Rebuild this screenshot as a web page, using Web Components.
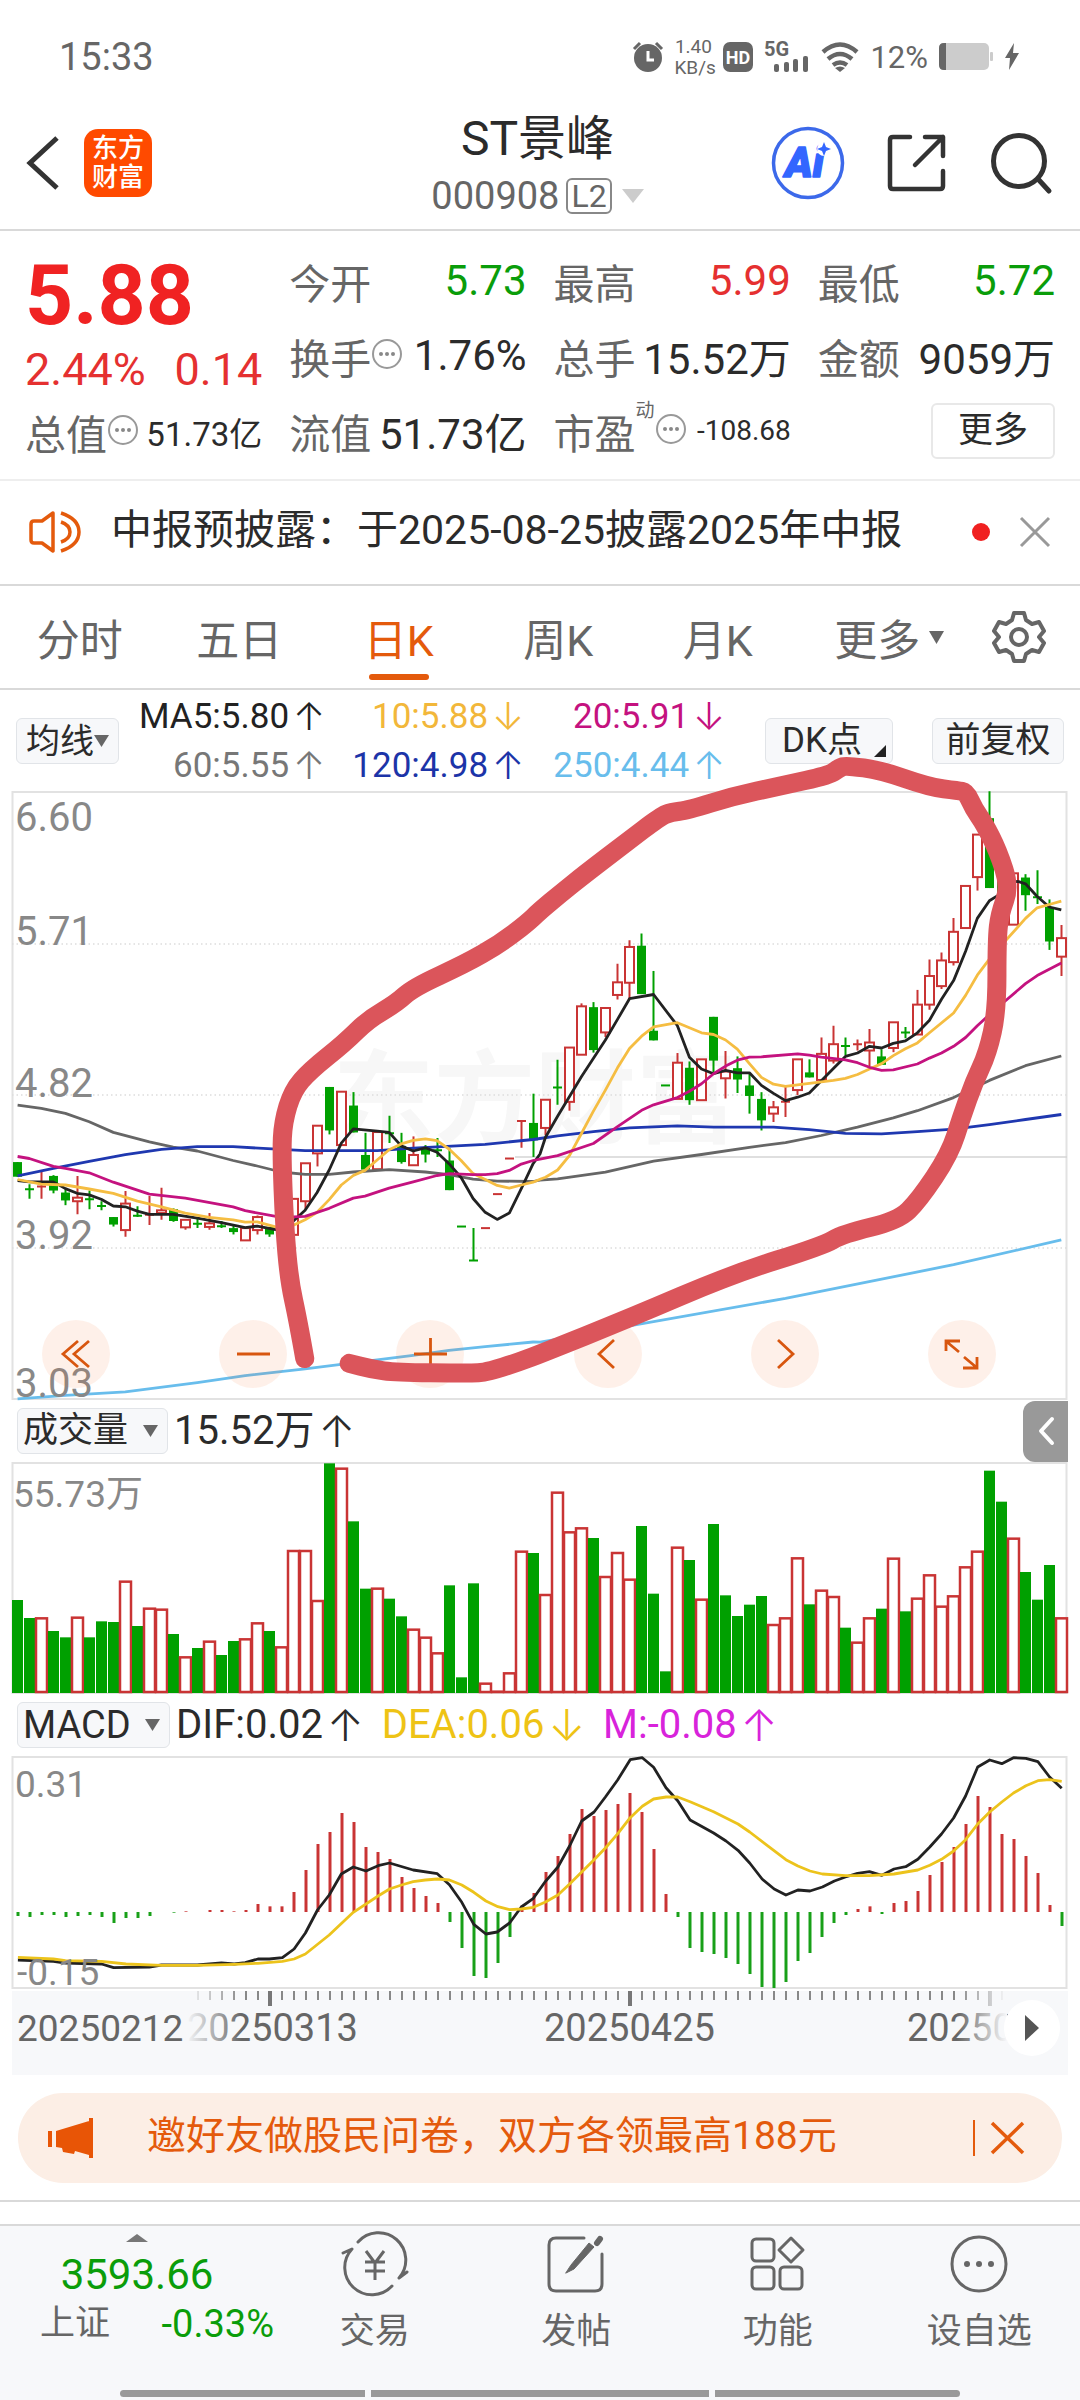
<!DOCTYPE html>
<html lang="zh-CN">
<head>
<meta charset="utf-8">
<meta name="viewport" content="width=device-width, initial-scale=1">
<title>ST景峰 000908</title>
<style>
  :root { --ink:#2b2b2b; --sub:#666; --red:#f02222; --green:#0a9d0a; --brand:#e45a0c; --line:#d9d9d9; --panel:#f7f8fa; }
  body { margin:0; background:#fff; color:var(--ink); font-family:Roboto,"Noto Sans CJK SC",sans-serif; }
</style>
</head>
<body>
<stock-page></stock-page>
<script>
const BASE = `<style>
  *{box-sizing:border-box}
  :host{display:block}
  button,select{font:inherit;color:inherit;background:none;border:0;padding:0;margin:0;appearance:none;cursor:pointer}
  svg{display:block;flex:none;overflow:visible}
</style>`;
const define = (name, html, setup) => customElements.define(name, class extends HTMLElement {
  connectedCallback() {
    if (this.shadowRoot) return;
    const t = document.createElement('template');
    t.innerHTML = BASE + html;
    this.attachShadow({ mode: 'open' }).append(t.content.cloneNode(true));
    if (setup) setup(this, this.shadowRoot);
  }
});

/* ---------- small parts ---------- */
define('drop-select', `<style>
  :host{display:inline-block}
  .w{display:grid;align-items:center;height:46px;border:1px solid #e1e4e8;border-radius:6px;background:var(--panel);font-size:35px;color:var(--ink)}
  select,svg{grid-area:1/1}
  select{height:44px;line-height:44px;padding:0 38px 0 5px}
  :host([latin]) select{font-size:38px}
  :host([tight]) select{padding-right:24px;padding-left:9px;font-size:34px}
  svg{justify-self:end;margin-right:9px;pointer-events:none}
</style>
<label class="w"><select></select><svg width="15" height="12"><path d="M0 0h15l-7.500 12z" fill="#666"/></svg></label>`, (el, r) => {
  const s = r.querySelector('select');
  s.setAttribute('aria-label', el.getAttribute('label'));
  s.append(new Option(el.getAttribute('value')));
});

define('value-tag', `<style>
  :host{display:inline-flex;align-items:center;justify-content:flex-end;white-space:nowrap}
  i{font:normal 300 1.1em/1 Inter,sans-serif;margin-left:4px}
</style><span><slot></slot></span><i></i>`, (el, r) => {
  r.querySelector('i').textContent = el.hasAttribute('up') ? '↑' : '↓';
});

define('quote-item', `<style>
  :host{display:flex;align-items:center;height:75px;font-size:42px;white-space:nowrap;color:var(--ink)}
  .l{font-size:41px;color:var(--sub)}
  .v{margin-left:auto}
  :host([tone=red]) .v{color:#e53030}
  :host([tone=green]) .v{color:var(--green)}
  :host([size=m]) .v{font-size:33px}
  :host([size=s]) .v{font-size:28px}
  :host([size=m]){height:60px}
  sup{font-size:19px;color:var(--sub);align-self:flex-start;line-height:20px;margin-top:8px}
  svg{display:none}
  :host([info]) svg{display:block}
</style><span class="l"><slot name="label"></slot></span><sup hidden></sup>
<svg width="32" height="32" viewBox="0 0 32 32" fill="none" stroke="#999" stroke-width="2"><circle cx="16" cy="14" r="14"/><g fill="#888" stroke="none"><circle cx="10" cy="14" r="2"/><circle cx="16" cy="14" r="2"/><circle cx="22" cy="14" r="2"/></g></svg>
<span class="v"><slot></slot></span>`, (el, r) => {
  if (el.hasAttribute('sup')) { const s = r.querySelector('sup'); s.hidden = false; s.textContent = el.getAttribute('sup'); }
});

/* ---------- bars ---------- */
define('status-bar', `<style>
  :host{display:flex;align-items:center;height:96px;padding:18px 60px 0 59px;color:#666;font-size:38px}
  .r{margin-left:auto;display:flex;align-items:center;gap:11px}
  .k{font-size:19px;line-height:21px;text-align:center;width:38px}
  .p{font-size:31px}
</style><span>15:33</span>
<div class="r">
  <svg width="30" height="30" viewBox="0 0 30 30"><circle cx="15" cy="16" r="14" fill="#666"/><path d="M1 7 7 1M29 7 23 1" stroke="#666" stroke-width="3"/><path d="M15 9v9h6" fill="none" stroke="#fff" stroke-width="3"/></svg>
  <div class="k">1.40<br>KB/s</div>
  <svg width="30" height="30" viewBox="0 0 30 30"><rect width="30" height="30" rx="7" fill="#666"/><text x="15" y="22" font-size="18" font-weight="700" fill="#fff" text-anchor="middle">HD</text></svg>
  <svg width="46" height="32" viewBox="0 0 46 32" fill="#666"><text x="0" y="15" font-size="20" font-weight="700">5G</text><rect x="10" y="23" width="5" height="8" rx="2"/><rect x="20" y="21" width="5" height="10" rx="2"/><rect x="29" y="18" width="5" height="13" rx="2"/><rect x="39" y="15" width="5" height="16" rx="2"/></svg>
  <svg width="38" height="30" viewBox="0 0 38 30" fill="none" stroke="#666" stroke-width="4.500"><path d="M2 10q17-15 34 0M7 17q12-10 24 0M12 23q7-5 14 0"/><path d="m14 26 5 4 5-4q-5-3-10 0z" fill="#666" stroke="none"/></svg>
  <span class="p">12%</span>
  <svg width="54" height="28" viewBox="0 0 54 28"><rect x="0" y="0" width="50" height="27" rx="5" fill="#ccc"/><path d="M7 0H5Q0 0 0 5v17q0 5 5 5h2z" fill="#666"/><rect x="51" y="9" width="3" height="9" rx="1" fill="#ccc"/></svg>
  <svg width="16" height="28" viewBox="0 0 16 28"><path d="M10 0 1 15h5L5 27 15 10H9z" fill="#666"/></svg>
</div>`);

define('stock-header', `<style>
  :host{display:grid;grid-template-columns:1fr auto 1fr;align-items:center;height:135px;padding:0 29px 0 24px;border-bottom:2px solid var(--line)}
  .a,.c{display:flex;align-items:center}
  .a{gap:22px}
  .c{justify-content:flex-end;gap:42px}
  .logo{width:68px;height:68px;border-radius:14px;background:#ff4a00;color:#fff;font-weight:500;font-size:26px;line-height:29px;display:flex;flex-direction:column;align-items:center;justify-content:center}
  h1{margin:0;font-size:48px;line-height:66px;font-weight:400;text-align:center}
  .s{display:flex;align-items:center;justify-content:center;font-size:38px;line-height:48px;color:var(--sub);gap:7px}
  .l2{border:2px solid #888;border-radius:6px;font-size:32px;line-height:32px;padding:0 3px}
  .s svg{margin-left:3px}
</style>
<div class="a"><button aria-label="返回"><svg width="38" height="56" viewBox="0 0 38 56"><path d="M33 3 6 28l27 25" fill="none" stroke="#333" stroke-width="5"/></svg></button>
<div class="logo"><span>东方</span><span>财富</span></div></div>
<div><h1>ST景峰</h1><div class="s"><span>000908</span><span class="l2">L2</span><svg width="22" height="14"><path d="M0 0h22L11 14z" fill="#ccc"/></svg></div></div>
<div class="c">
 <button aria-label="AI 助手"><svg width="74" height="74" viewBox="0 0 74 74"><circle cx="37" cy="37" r="34.500" fill="none" stroke="#3c69ea" stroke-width="3.500"/><text x="14" y="51" font-size="42" font-weight="900" font-style="italic" fill="#3366ff" stroke="#3366ff" stroke-width="1.500" stroke-linejoin="round">Ai</text><circle cx="53" cy="23" r="7" fill="#fff"/><path d="m53 16 2 5 5 2-5 2-2 5-2-5-5-2 5-2z" fill="#3366ff"/></svg></button>
 <button aria-label="分享"><svg width="60" height="60" viewBox="0 0 60 60" fill="none" stroke="#333" stroke-width="4.500" stroke-linecap="round" stroke-linejoin="round"><path d="M23 4H6q-3 0-3 3v46q0 3 3 3h47q3 0 3-3V38M38 4h18v19M56 4 28 32"/></svg></button>
 <button aria-label="搜索"><svg width="62" height="60" viewBox="0 0 62 60" fill="none" stroke="#333" stroke-width="5" stroke-linecap="round"><circle cx="30" cy="28" r="25.500"/><path d="m49 46 11 12"/></svg></button>
</div>`);

define('quote-panel', `<style>
  :host{display:grid;grid-template-columns:repeat(4,1fr);column-gap:27px;padding:12px 25px 11px;border-bottom:2px solid #eee}
  .p{padding-top:11px}
  .big{font-size:84px;line-height:84px;font-weight:700;color:var(--red)}
  .chg{display:flex;justify-content:space-between;font-size:45px;line-height:64px;color:#e53030}
  .m{height:75px;display:flex;align-items:center;justify-content:flex-end}
  .m button{width:124px;height:56px;border:2px solid #e8e8e8;border-radius:6px;font-size:35px;line-height:50px;color:var(--ink)}
</style>
<div class="p"><div class="big">5.88</div><div class="chg"><span>2.44%</span><span>0.14</span></div><quote-item size="m" info><span slot="label">总值</span>51.73亿</quote-item></div>
<div><quote-item tone="green"><span slot="label">今开</span>5.73</quote-item><quote-item info><span slot="label">换手</span>1.76%</quote-item><quote-item><span slot="label">流值</span>51.73亿</quote-item></div>
<div><quote-item tone="red"><span slot="label">最高</span>5.99</quote-item><quote-item><span slot="label">总手</span>15.52万</quote-item><quote-item size="s" info sup="动"><span slot="label">市盈</span>-108.68</quote-item></div>
<div><quote-item tone="green"><span slot="label">最低</span>5.72</quote-item><quote-item><span slot="label">金额</span>9059万</quote-item><div class="m"><button>更多</button></div></div>`);

define('notice-bar', `<style>
  :host{display:flex;align-items:center;height:105px;padding:0 30px 2px 28px;border-bottom:2px solid var(--line);font-size:41px;line-height:60px;white-space:nowrap}
  span{margin-left:29px;padding-bottom:3px}
  b{margin-left:auto;width:18px;height:18px;border-radius:50%;background:#f02020;margin-right:30px}
</style>
<svg width="54" height="44" viewBox="0 0 54 44" fill="none" stroke="#e45a0c" stroke-width="3.500" stroke-linejoin="round"><path d="M25 3 14 11H6q-3 0-3 3v16q0 3 3 3h8l11 8zM33 3q18 6 18 19T33 41M33 12q9 3 9 10t-9 10"/></svg>
<span>中报预披露：于2025-08-25披露2025年中报</span><b></b>
<button aria-label="关闭"><svg width="30" height="30" viewBox="0 0 30 30" stroke="#999" stroke-width="3"><path d="m1 1 28 28M29 1 1 29"/></svg></button>`);

define('period-tabs', `<style>
  :host{display:flex;align-items:center;height:104px;border-bottom:2px solid var(--line);font-size:43px;color:var(--sub)}
  button{flex:1;height:100%;display:flex;align-items:center;justify-content:center;position:relative}
  .on{color:var(--brand)}
  .on::after{content:"";position:absolute;left:50%;bottom:8px;width:60px;height:6px;margin-left:-30px;border-radius:3px;background:var(--brand)}
  .more svg{margin:0 -24px 0 9px}
  .gear{flex:0 0 123px}
</style>
<button>分时</button><button>五日</button><button class="on">日K</button><button>周K</button><button>月K</button>
<button class="more">更多<svg width="15" height="13"><path d="M0 0h15l-7.500 13z" fill="#666"/></svg></button>
<button class="gear" aria-label="设置"><svg width="54" height="54" viewBox="0 0 54 54" fill="none" stroke="#666" stroke-width="4" stroke-linejoin="round"><path d="M22 3h10l2 7 6 4 7-2 5 9-5 6 5 6-5 9-7-2-6 4-2 7H22l-2-7-6-4-7 2-5-9 5-6-5-6 5-9 7 2 6-4z"/><circle cx="27" cy="27" r="8"/></svg></button>`);

define('ma-legend', `<style>
  :host{display:flex;align-items:center;height:101px;padding:0 16px;font-size:35px}
  .g{display:grid;grid-template-columns:auto 199px 201px;line-height:49px;margin-left:20px}
  .g>*{justify-self:end}
  .b{height:46px;border:1px solid #e1e4e8;border-radius:6px;background:var(--panel);font-size:35px;line-height:42px;position:relative;white-space:nowrap}
  .dk{width:128px;margin-left:auto;padding-right:14px}
  .dk svg{position:absolute;right:6px;bottom:6px}
  .fq{width:132px;margin-left:39px}
</style>
<drop-select tight label="指标" value="均线"></drop-select>
<div class="g">
<value-tag up style="color:#222">MA5:5.80</value-tag><value-tag style="color:#f2b73a">10:5.88</value-tag><value-tag style="color:#c4127f">20:5.91</value-tag>
<value-tag up style="color:#777">60:5.55</value-tag><value-tag up style="color:#1c34a8">120:4.98</value-tag><value-tag up style="color:#68bdec">250:4.44</value-tag>
</div>
<button class="b dk">DK点<svg width="12" height="12"><path d="M12 0v12H0z" fill="#222"/></svg></button><button class="b fq">前复权</button>`);

/* ---------- chart data ---------- */
const RED = '#c93434', GREEN = '#00a000';
const X = i => 5.5 + 12 * i;
/* Plot points are stored on two half-width grids; L and R turn them into chart units. */
const L = (sy, oy) => ([x, y]) => [x / 2.904 - 12, y / sy + oy];
const R = (sy, oy) => ([x, y]) => [x / 2.904 + 528, y / sy + oy];
const pairs = s => s.trim().split(' ').map(p => p.split(',').map(Number));
const pts = (l, r, fl, fr) => [...pairs(l).map(fl), ...pairs(r).map(fr)].map(p => p.map(n => n.toFixed(1)).join(',')).join(' ');

const KL = L(2.529, -1), KR = R(2.376, -41);
/* colour, high, body top, body bottom, low */
const candlesL = `g941,941,978,978 g997,1010,1010,1034 r966,1003,1003,1034 g974,976,1013,1020 g1010,1018,1038,1050 r976,1031,1040,1073 g1013,1035,1035,1060 g1040,1052,1052,1063 g1080,1080,1099,1104 r1014,1046,1113,1130 g1053,1077,1077,1080 r1027,1074,1074,1100 r1006,1063,1070,1087 g1058,1060,1090,1092 r1087,1087,1106,1112 g1085,1097,1097,1108 r1070,1096,1105,1112 g1090,1103,1103,1108 g1100,1108,1118,1124 r1108,1108,1139,1139 r1076,1080,1113,1124 g1105,1105,1124,1130 r1080,1080,1125,1125 r1034,1034,1125,1125 r944,944,1040,1060 r849,849,919,952 g751,751,861,871 r763,763,898,898 g764,798,866,866 g867,923,960,960 r865,865,959,959 g824,868,868,893 g867,900,941,945 r876,923,949,949 g898,908,922,942 g880,911,911,928 g905,937,1012,1012 g1104,1104,1104,1104 g1108,1190,1190,1190 r1108,1108,1108,1108 r1022,1022,1022,1022 r932,932,932,932 r837,837,837,905 g768,842,886,928`.split(' ');
const candlesR = `r831,831,898,915 g736,802,802,843 r707,707,836,857 r602,609,724,724 g599,611,713,719 r613,613,671,682 r508,552,582,593 r452,468,553,592 g436,465,580,580 g525,667,690,690 g797,797,797,797 r720,743,829,829 g740,755,832,843 r735,735,832,832 g634,634,738,768 r715,764,780,828 g728,756,783,815 g768,797,822,864 g813,829,880,904 r834,849,864,884 r800,836,836,872 r735,735,808,820 g735,766,778,778 r683,722,784,784 r655,699,738,745 g683,703,703,725 r688,699,699,714 r663,695,714,752 g711,728,748,748 r647,647,708,718 g658,671,671,685 r570,605,676,676 r498,537,605,617 r481,500,561,568 r399,432,504,512 r323,323,423,423 r201,201,302,334 g98,162,328,328 g240,240,340,340 r293,293,415,415 g295,303,345,382 g286,350,350,366 g355,373,455,475 r416,447,491,537`.split(' ');
const ma = [
 ['#68bdec', '51,1540 190,1531 364,1522 573,1499 712,1481 886,1464 1060,1445 1200,1430 1304,1417 1409,1408 1548,1396', '0,1407 86,1395 260,1368 713,1303 1201,1223 1514,1164'],
 ['#666', '51,797 120,805 190,818 259,839 329,866 434,890 503,903 573,913 677,937 747,951 817,966 886,972 956,972 1026,966 1130,960 1235,966 1304,973 1374,984 1444,989 1548,990', '0,1022 51,1019 190,1003 330,977 469,961 608,944 713,933 817,916 922,896 1026,874 1096,857 1201,826 1305,785 1410,750 1514,727'],
 ['#1f38b0', '51,976 155,957 259,939 364,922 469,909 573,902 677,902 817,909 886,912 1096,912 1200,906 1409,896 1548,884', '0,923 51,917 155,907 260,898 399,893 504,896 678,896 782,902 887,911 992,912 1096,907 1201,901 1305,890 1410,878 1514,866'],
 ['#222', '51,988 85,991 155,991 190,1008 224,1020 259,1024 294,1035 329,1052 364,1054 399,1065 434,1073 503,1073 573,1083 643,1094 712,1107 747,1103 800,1112 817,1108 852,1090 886,1063 921,1018 956,961 991,893 1026,857 1096,863 1130,866 1165,900 1200,913 1235,905 1269,916 1304,945 1339,980 1374,1033 1409,1068 1444,1086 1479,1070 1514,1008 1548,945', '0,960 16,920 51,870 121,775 190,689 225,640 260,591 330,581 399,655 434,730 469,758 504,769 539,761 573,767 608,767 643,797 678,816 713,833 748,825 782,815 817,786 852,757 887,728 922,720 957,704 992,708 1026,697 1061,691 1096,672 1131,642 1166,592 1201,548 1236,478 1270,400 1305,358 1335,343 1375,312 1390,313 1410,318 1444,348 1479,373 1514,380'],
 ['#f5bd42', '51,985 120,997 190,999 259,1009 329,1020 399,1040 469,1054 538,1070 608,1081 677,1087 712,1093 747,1092 800,1105 852,1101 886,1087 921,1068 956,1036 991,999 1026,975 1060,962 1096,935 1130,910 1165,895 1200,886 1235,882 1269,887 1304,908 1339,937 1374,970 1409,985 1444,1000 1479,1007 1514,999 1548,992', '0,1020 16,1015 51,998 86,963 121,910 155,858 190,808 225,755 260,709 295,680 330,658 399,648 469,672 504,676 539,689 573,711 608,745 643,778 678,794 713,799 782,792 852,785 887,780 922,771 957,758 992,745 1026,726 1061,710 1096,696 1131,672 1201,625 1236,583 1270,535 1305,497 1352,453 1410,400 1444,375 1479,367 1514,359'],
 ['#c4127f', '51,927 85,932 155,952 190,957 259,968 329,992 434,1022 538,1032 677,1054 712,1064 817,1081 886,1078 956,1058 1026,1032 1060,1027 1130,1007 1200,991 1269,975 1304,970 1374,973 1409,973 1444,970 1479,962 1514,946 1548,937', '0,972 51,964 155,935 225,895 295,856 330,843 399,826 434,811 469,793 504,769 539,751 573,737 608,730 643,729 748,722 782,725 817,730 887,736 922,743 957,754 992,761 1026,760 1096,746 1131,732 1166,720 1201,704 1236,683 1270,655 1305,629 1350,597 1410,555 1444,536 1514,506']
];
const pen = [
 '885,1438 865,1340 840,1240 826,1100 818,920 822,840 850,760 900,710 1000,640 1070,580 1150,540 1200,500 1350,440 1450,390 1530,337',
 '0,382 60,341 130,295 250,220 350,158 380,148 430,143 560,110 700,85 840,60 870,42 890,37 990,48 1130,88 1215,97 1238,100 1260,140 1290,175 1330,240 1364,325 1335,390 1327,450 1327,620 1300,720 1260,790 1225,870 1190,960 1100,1070 1040,1118 880,1150 820,1178 560,1245 260,1350 0,1435',
 '1500,1449 1420,1470 1390,1474 1350,1475 1150,1473 1080,1465 1014,1450'];
/* Draws a rounded freehand line through the middle of each pair of points. */
const smooth = p => {
  let d = `M${p[0]}`;
  for (let i = 1; i < p.length - 1; i++) d += `Q${p[i]} ${(p[i][0] + p[i + 1][0]) / 2},${(p[i][1] + p[i + 1][1]) / 2}`;
  return d + `L${p[p.length - 1]}`;
};

function candle(s, i, f) {
  const [h, t, b, l] = s.slice(1).split(',').map(n => f([0, +n])[1]), x = X(i), red = s[0] === 'r', c = red ? RED : GREEN;
  if (b - t < 1) return `<path d="M${x} ${h}V${l}M${x - 4.5} ${t}h9" stroke="${c}" stroke-width="2"/>`;
  if (!red) return `<path d="M${x} ${h}V${l}" stroke="${c}" stroke-width="2"/><rect x="${x - 4.5}" y="${t}" width="9" height="${b - t}" fill="${c}"/>`;
  return `<path d="M${x} ${h}V${t}M${x} ${b}V${l}" stroke="${c}" stroke-width="2"/><rect x="${x - 4.5}" y="${t}" width="9" height="${b - t}" fill="#fff" stroke="${c}" stroke-width="2"/>`;
}

define('kline-chart', `<style>
  :host{position:relative;margin:0 12px}
  svg.c{width:100%;height:auto}
  .pen{position:absolute;inset:0;pointer-events:none}
  .bar{position:absolute;left:0;right:0;bottom:12px;display:flex;justify-content:space-between;padding:0 72px 0 30px}
  button{width:68px;height:68px;border-radius:50%;background:rgba(245,110,40,.1);display:grid;place-items:center}
</style>
<svg class="c main" viewBox="0 0 1056 609" role="img" aria-label="日K线"></svg>
<div class="bar"></div>
<svg class="c pen" viewBox="0 0 1056 609" aria-hidden="true"></svg>`, (el, r) => {
  let s = '<text x="321" y="344" font-size="101" font-weight="700" fill="#f7f7f7">东方财富</text>';
  s += '<path d="M.500 1h1054v607H.500z" fill="none" stroke="#e2e2e2" stroke-width="2"/>';
  s += '<path d="M0 153h1055M0 304h1055M0 457h1055" stroke="#ddd" stroke-width="1.500" stroke-dasharray="1.500 3"/>';
  s += '<path d="M503 366h552" stroke="#d5d5d5" stroke-width="1.500"/>';
  s += candlesL.map((c, i) => candle(c, i, KL)).join('') + candlesR.map((c, i) => candle(c, i + 44, KR)).join('');
  for (const [c, a, b] of ma) s += `<polyline points="${pts(a, b, KL, KR)}" fill="none" stroke="${c}" stroke-width="2.800" stroke-linejoin="round"/>`;
  for (const [t, y] of [['6.60', 40], ['5.71', 154], ['4.82', 306], ['3.92', 458], ['3.03', 606]]) s += `<text x="3" y="${y}" font-size="40" fill="#888">${t}</text>`;
  r.querySelector('.main').innerHTML = s;
  const icons = [['最早', 'M17 2 2 15l15 13M28 2 13 15l15 13'], ['缩小', 'M-1 15h33'], ['放大', 'M-1 15h33M15.500 -1v33'], ['向左', 'M22 1 7 15l15 14'], ['向右', 'M9 1l15 14L9 29'], ['全屏', 'M0 12V2h14M1 3l12 10M31 18v11H17M30 28 18 18']];
  r.querySelector('.bar').innerHTML = icons.map(([n, d]) => `<button aria-label="${n}"><svg width="31" height="31" viewBox="0 0 31 31" fill="none" stroke="#d8560f" stroke-width="2.800"><path d="${d}"/></svg></button>`).join('');
  const line = [...pairs(pen[0]).map(KL), ...pairs(pen[1]).map(KR), ...pairs(pen[2]).map(KL)];
  r.querySelector('.pen').innerHTML = `<path d="${smooth(line)}" fill="none" stroke="#db555b" stroke-width="19" stroke-linecap="round" stroke-linejoin="round"/>`;
});

const volume = 'g630 g684 r682 g723 g742 r680 g742 g694 g696 r572 g708 r653 r656 g732 r799 g774 r752 g795 g753 r745 r697 g723 r769 r480 r480 r630 g220 r233 g394 g596 r593 g626 g679 r716 r740 r787 g586 g862 g580 r878 r902 r847 r482 g489 r612 r305 r424 r412 g444 r558 r486 r566 g408 g611 g844 r470 g510 r626 g402 g616 g678 g644 g618 r702 r682 r502 g643 r599 r618 g713 r755 r682 g656 r503 g664 r623 r553 r647 r616 r529 r482 g242 g335 r443 g546 g629 g525 r682'.split(' ');
define('volume-chart', `<style>:host{margin:0 12px}svg{width:100%;height:auto}</style><svg viewBox="0 0 1056 232" role="img" aria-label="成交量"></svg>`, (el, r) => {
  let s = '<path d="M.500 1h1054v230H.500z" fill="none" stroke="#e2e2e2" stroke-width="2"/>';
  volume.forEach((v, i) => {
    const y = +v.slice(1) / 3 - 72, x = X(i);
    s += v[0] === 'g' ? `<rect x="${x - 5.5}" y="${y}" width="11" height="${231 - y}" fill="${GREEN}"/>`
      : `<rect x="${x - 5.5}" y="${y + 1}" width="11" height="${229 - y}" fill="#fff" stroke="${RED}" stroke-width="2.500"/>`;
  });
  r.querySelector('svg').innerHTML = s + '<text x="1" y="45" font-size="37" fill="#888">55.73万</text>';
});

const macd = [681,684,678,678,684,681,678,684,702,687,687,681,669,671,667,669,663,663,667,663,645,652,652,609,543,465,429,372,399,474,489,510,564,597,621,642,699,777,861,867,822,744,650,612,549,501,435,360,381,363,345,312,369,480,615,684,777,789,795,807,825,855,894,897,879,816,792,744,702,678,660,652,675,642,636,606,558,519,474,405,321,354,435,450,501,552,648,711];
const dif = ['52,813 155,817 190,822 295,825 330,836 434,834 469,828 573,828 643,822 680,825 712,821 749,810 782,810 820,806 854,780 887,732 922,663 956,618 991,555 1026,534 1063,546 1098,530 1131,522 1200,543 1270,554 1305,587 1341,640 1376,706 1411,735 1444,729 1480,702 1514,654 1549,628', '16,577 52,534 86,471 121,396 157,369 190,324 226,272 262,212 297,206 330,235 366,296 400,335 436,393 504,432 540,456 575,484 609,522 645,570 680,600 714,618 749,603 784,606 820,594 855,576 887,564 922,553 957,548 993,559 1028,540 1062,533 1097,511 1132,474 1166,435 1201,387 1236,321 1271,234 1306,213 1341,224 1375,206 1411,208 1446,218 1480,264 1515,298'];
const dea = ['52,805 155,810 190,815 295,817 366,825 469,829 573,829 680,826 749,823 820,817 854,810 887,795 956,738 1026,670 1098,621 1131,600 1166,588 1200,578 1235,573 1270,570 1305,573 1341,588 1376,610 1411,636 1446,653 1480,662 1514,660 1549,655', '16,639 52,618 86,585 157,512 190,477 226,434 262,386 297,352 330,330 366,324 400,324 436,338 504,368 575,405 609,429 714,512 749,531 784,546 820,555 887,560 957,560 1028,555 1097,543 1132,529 1166,511 1201,486 1236,452 1271,405 1306,369 1341,339 1375,312 1411,290 1446,275 1480,272 1515,277'];
define('macd-chart', `<style>:host{margin:0 12px}svg{width:100%;height:auto}</style><svg viewBox="0 0 1056 233" role="img" aria-label="MACD"></svg>`, (el, r) => {
  let s = '<path d="M.500 1h1054v231H.500z" fill="none" stroke="#e2e2e2" stroke-width="2"/>';
  const fl = L(3, -67), fr = R(3, -67);
  const line = (a, c) => `<polyline points="${pts(a[0], a[1], fl, fr)}" fill="none" stroke="${c}" stroke-width="2.800" stroke-linejoin="round"/>`;
  macd.forEach((v, i) => { if (v !== 669) s += `<path d="M${X(i) + .5} 156V${v / 3 - 67}" stroke="${v > 669 ? '#18a018' : RED}" stroke-width="3"/>`; });
  s += line(dif, '#222') + line(dea, '#ecc31c');
  r.querySelector('svg').innerHTML = s + '<g font-size="37" fill="#888"><text x="3" y="41">0.31</text><text x="5" y="229">-0.15</text></g>';
});

define('time-axis', `<style>
  :host{position:relative;margin:2px 12px 0;background:var(--panel)}
  svg.a{width:100%;height:auto}
  button{position:absolute;right:8px;top:9px;width:56px;height:56px;border-radius:50%;background:#fff;display:grid;place-items:center}
</style><svg class="a" viewBox="0 0 1056 84"></svg><button aria-label="播放"><svg width="14" height="26"><path d="M0 0v26l14-13z" fill="#555"/></svg></button>`, (el, r) => {
  let s = '<defs><linearGradient id="l"><stop offset="0" stop-color="#f7f8fa"/><stop offset="1" stop-color="#f7f8fa" stop-opacity="0"/></linearGradient><linearGradient id="r"><stop offset="0" stop-color="#f7f8fa" stop-opacity="0"/><stop offset="1" stop-color="#f7f8fa"/></linearGradient></defs>';
  for (let i = 15; i < 83; i++) s += i % 30 === 21 ? `<path d="M${X(i) + .5} 0v15" stroke="#777" stroke-width="4"/>` : `<path d="M${X(i) + .5} 0v9" stroke="#888" stroke-width="2"/>`;
  s += '<g font-size="38" fill="#666"><text x="175" y="50">20250313</text><text x="532" y="50">20250425</text><text x="895" y="50">20250</text></g>';
  s += '<rect x="174" width="56" height="84" fill="url(#l)"/><rect x="945" width="50" height="84" fill="url(#r)"/><text x="5" y="50" font-size="37" fill="#666">20250212</text>';
  r.querySelector('.a').innerHTML = s;
});

define('indicator-row', `<style>
  :host{display:flex;align-items:center;height:62px;padding-left:17px;font-size:40px;line-height:56px;gap:6px}
  .t{display:flex;gap:18px}
</style><slot name="pick"></slot><div class="t"><slot></slot></div><slot name="end"></slot>`);

define('side-tab', `<style>
  :host{margin:0 12px 0 auto}
  button{display:grid;place-items:center;width:45px;height:61px;background:#999;border-radius:12px 0 0 12px}
</style><button aria-label="展开"><svg width="16" height="28" viewBox="0 0 16 28"><path d="M14 2 3 14l11 12" fill="none" stroke="#fff" stroke-width="4" stroke-linecap="round" stroke-linejoin="round"/></svg></button>`);

/* ---------- foot ---------- */
define('promo-banner', `<style>
  :host{display:flex;align-items:center;height:90px;margin:18px 18px 17px;padding:0 38px 0 28px;border-radius:45px;background:#fceee5;color:var(--brand);font-size:39px;line-height:56px;white-space:nowrap}
  span{margin-left:53px;padding-bottom:4px}
  i{margin-left:auto;width:2px;height:36px;background:var(--brand);margin-right:16px}
</style>
<svg width="48" height="42" viewBox="0 0 48 42" fill="#e85506"><path d="M2 14h4v16H2zM10 14 43 4v34l-14-4-1 3-11-2-1-4-6-1zM43 1h4v40h-4z"/></svg>
<span>邀好友做股民问卷，双方各领最高188元</span><i></i>
<button aria-label="关闭"><svg width="33" height="32" viewBox="0 0 33 32" stroke="#e45a0c" stroke-width="3.500"><path d="m1 1 31 30M32 1 1 31"/></svg></button>`);

define('nav-item', `<style>
  :host{flex:1;display:block}
  button{width:100%;display:flex;flex-direction:column;align-items:center;font-size:35px;line-height:50px;color:var(--sub);gap:13px}
</style><button><svg width="60" height="60" viewBox="0 0 60 60" fill="none" stroke="#666" stroke-width="3" stroke-linejoin="round" stroke-linecap="round"></svg><slot></slot></button>`, (el, r) => {
  const art = {
    trade: '<path d="M13 8A27 27 0 0 1 54 44l8-6M47 52A27 27 0 0 1 7 15l-9 4"/><path d="m21 17 9 12 9-12M30 29v17M20 28h20M20 37h20" stroke-linecap="butt"/>',
    post: '<path d="M38 4H10q-7 0-7 7v39q0 7 7 7h39q7 0 7-7V20"/><path d="m20 39 8-4 20-22-5-4-18 22z" fill="#666" stroke-width="1"/><path d="m51 9 3-4" stroke-width="6"/>',
    tools: '<rect x="4" y="5" width="22" height="22" rx="4"/><rect x="4" y="33" width="22" height="22" rx="4"/><rect x="32" y="33" width="22" height="22" rx="4"/><path d="m43 4 12 12-12 12-12-12z"/>',
    fav: '<circle cx="30" cy="30" r="27"/><g fill="#666" stroke="none"><circle cx="18" cy="30" r="3"/><circle cx="30" cy="30" r="3"/><circle cx="42" cy="30" r="3"/></g>'
  };
  r.querySelector('svg').innerHTML = art[el.getAttribute('icon')];
});

define('bottom-nav', `<style>
  :host{margin-top:22px;border-top:2px solid var(--line);background:var(--panel)}
  .r{display:flex;height:164px;padding-top:8px}
  .x{flex:0 0 274px;display:flex;flex-direction:column;align-items:center;color:var(--green)}
  .x b{font-size:42px;font-weight:400;line-height:50px;margin-top:8px}
  .x div{display:flex;justify-content:space-between;align-self:stretch;padding-left:40px;font-size:38px;line-height:48px}
  .x em{font-style:normal;font-size:35px;color:var(--sub)}
  nav{display:flex;flex:1}
  .h{display:flex;gap:6px;padding:0 120px 3px}
  .h i{flex:245;height:7px;background:#999}
  .h i:nth-child(2){flex:337}
  .h i:first-child{border-radius:4px 0 0 4px}.h i:last-child{border-radius:0 4px 4px 0}
</style>
<div class="r"><div class="x"><svg width="22" height="8"><path d="M0 8 11 0l11 8z" fill="#777"/></svg><b>3593.66</b><div><em>上证</em><span>-0.33%</span></div></div>
<nav><nav-item icon="trade">交易</nav-item><nav-item icon="post">发帖</nav-item><nav-item icon="tools">功能</nav-item><nav-item icon="fav">设自选</nav-item></nav></div>
<div class="h"><i></i><i></i><i></i></div>`);

define('stock-page', `<style>.rule{border-top:2px solid var(--line)}</style>
<status-bar></status-bar><stock-header></stock-header><quote-panel></quote-panel><notice-bar></notice-bar><period-tabs></period-tabs>
<ma-legend></ma-legend><kline-chart></kline-chart>
<indicator-row><drop-select slot="pick" label="副图" value="成交量"></drop-select><value-tag up>15.52万</value-tag><side-tab slot="end"></side-tab></indicator-row>
<volume-chart></volume-chart>
<indicator-row><drop-select latin slot="pick" label="副图" value="MACD"></drop-select><value-tag up>DIF:0.02</value-tag><value-tag style="color:#eec315">DEA:0.06</value-tag><value-tag up style="color:#d823db">M:-0.08</value-tag></indicator-row>
<macd-chart></macd-chart><time-axis></time-axis>
<promo-banner></promo-banner><div class="rule"></div><bottom-nav></bottom-nav>`);
</script>
</body>
</html>
